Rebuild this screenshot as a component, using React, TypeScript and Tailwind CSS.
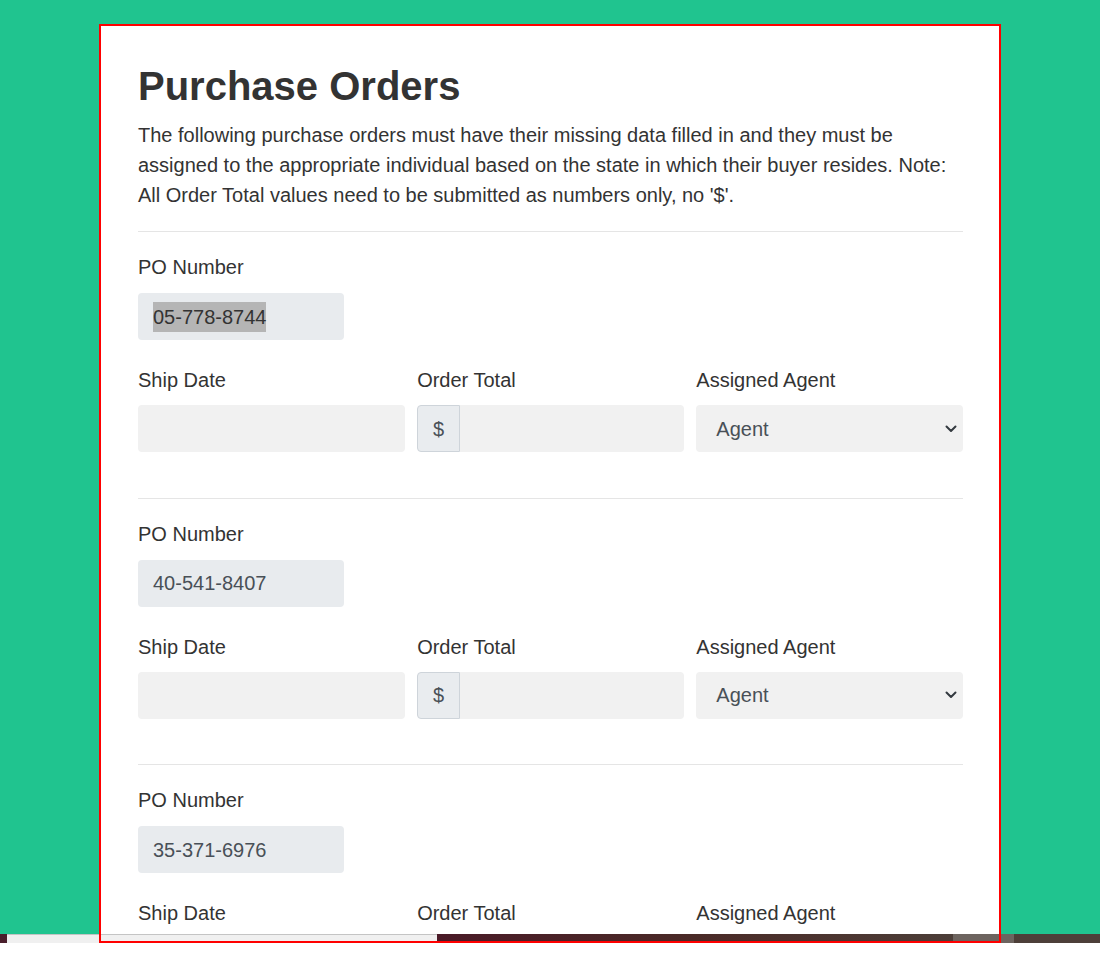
import React from 'react';

const orders = [
  { po: '05-778-8744', selected: true },
  { po: '40-541-8407', selected: false },
  { po: '35-371-6976', selected: false },
];

function Chevron() {
  return (
    <svg width="12" height="8" viewBox="0 0 12 8" fill="none">
      <path d="M1.5 1.5 6 6l4.5-4.5" stroke="#343a40" strokeWidth="2" strokeLinecap="round" strokeLinejoin="round" />
    </svg>
  );
}

function OrderSection({ po, selected }: { po: string; selected: boolean }) {
  return (
    <div className="border-t border-[#e5e5e5] pt-5 pb-[45.5px]">
      <label className="block text-[20px] leading-[30px] mb-[11px]">PO Number</label>
      <div className="w-[206px] h-[47px] rounded bg-[#e8ebee] px-[15px] flex items-center text-[20px] text-[#495057]">
        {selected ? <span className="bg-[#b5b5b5] text-[#333]">{po}</span> : <span>{po}</span>}
      </div>

      <div className="grid grid-cols-3 gap-x-[12.5px] mt-[25px]">
        <div>
          <label className="block text-[20px] leading-[30px] mb-[10px]">Ship Date</label>
          <div className="h-[47px] rounded bg-[#f1f1f1]" />
        </div>
        <div>
          <label className="block text-[20px] leading-[30px] mb-[10px]">Order Total</label>
          <div className="flex h-[47px]">
            <div className="w-[43px] rounded-l border border-[#ced4da] bg-[#e9ecef] flex items-center justify-center text-[20px] text-[#495057]">
              $
            </div>
            <div className="flex-1 rounded-r bg-[#f1f1f1]" />
          </div>
        </div>
        <div>
          <label className="block text-[20px] leading-[30px] mb-[10px]">Assigned Agent</label>
          <div className="h-[47px] rounded bg-[#f1f1f1] pl-5 pr-[6px] flex items-center justify-between text-[20px] text-[#495057]">
            <span>Agent</span>
            <Chevron />
          </div>
        </div>
      </div>
    </div>
  );
}

export default function App() {
  return (
    <div className="relative h-[968px] overflow-hidden bg-white text-[#333] font-['Liberation_Sans',Arial,sans-serif]">
      <div className="h-[934px] overflow-hidden bg-[#20c48f] pt-[26px]">
        <div className="ml-[101px] w-[898px] min-h-[908px] bg-white pl-[37px] pr-[36px] pt-[36px]">
          <h1 className="text-[40px] leading-[48px] font-bold text-[#333]">Purchase Orders</h1>
          <p className="mt-[10px] mb-[21px] text-[20px] leading-[30px]">
            The following purchase orders must have their missing data filled in and they must be assigned to the
            appropriate individual based on the state in which their buyer resides. Note: All Order Total values need to
            be submitted as numbers only, no '$'.
          </p>
          {orders.map((o) => (
            <OrderSection key={o.po} po={o.po} selected={o.selected} />
          ))}
        </div>
      </div>

      <div className="flex h-[9px]">
        <div className="w-[7px] bg-[#4a1f2c]" />
        <div className="w-[430px] border-t border-[#c4c4c4] bg-[#f0f0f0]" />
        <div className="w-[516px] bg-gradient-to-r from-[#4a1a27] via-[#4a2a27] to-[#4c3e38]" />
        <div className="w-[61px] bg-[#6d645f]" />
        <div className="flex-1 bg-[#4d3f39]" />
      </div>

      {/* highlight frame drawn over the card */}
      <div className="pointer-events-none absolute left-[99px] top-[24px] w-[902px] h-[919px] border-2 border-[#ff0000]" />
    </div>
  );
}
